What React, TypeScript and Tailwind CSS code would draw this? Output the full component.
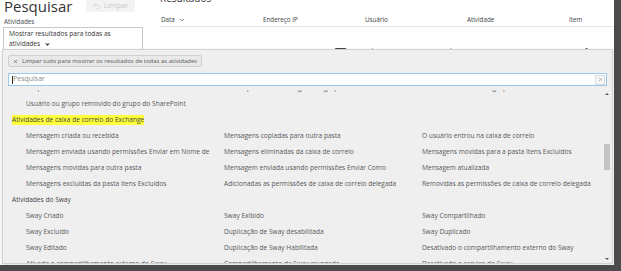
import { ChevronDown, Undo2, X } from "lucide-react";

const font = { fontFamily: '"Open Sans", "Noto Sans", sans-serif' };

const columns = ["Endereço IP", "Usuário", "Atividade", "Item"];

type Row = { group?: string; highlight?: boolean; items?: string[] };

const rows: Row[] = [
  { items: ["Grupo de site do SharePoint alterado", "Solicitação de acesso negada ao grupo", "Usuário adicionado ao grupo"] },
  { items: ["Usuário ou grupo removido do grupo do SharePoint"] },
  { group: "Atividades de caixa de correio do Exchange", highlight: true },
  { items: ["Mensagem criada ou recebida", "Mensagens copiadas para outra pasta", "O usuário entrou na caixa de correio"] },
  { items: ["Mensagem enviada usando permissões Enviar em Nome de", "Mensagens eliminadas da caixa de correio", "Mensagens movidas para a pasta Itens Excluídos"] },
  { items: ["Mensagens movidas para outra pasta", "Mensagem enviada usando permissões Enviar Como", "Mensagem atualizada"] },
  { items: ["Mensagens excluídas da pasta Itens Excluídos", "Adicionadas as permissões de caixa de correio delegada", "Removidas as permissões de caixa de correio delegada"] },
  { group: "Atividades do Sway" },
  { items: ["Sway Criado", "Sway Exibido", "Sway Compartilhado"] },
  { items: ["Sway Excluído", "Duplicação de Sway desabilitada", "Sway Duplicado"] },
  { items: ["Sway Editado", "Duplicação de Sway Habilitada", "Desativado o compartilhamento externo do Sway"] },
  { items: ["Ativado o compartilhamento externo do Sway", "Compartilhamento de Sway revogado", "Desativado o serviço do Sway"] },
];

export default function App() {
  return (
    <div className="w-[621px] h-[271px] bg-[#4a4a4a] overflow-hidden" style={font}>
      <div className="relative w-[614px] h-[265px] bg-white overflow-hidden">
        {/* top area */}
        <div className="flex">
          <div className="w-[155px] shrink-0 pl-[4px]">
            <div className="flex h-[16px] items-start">
              <p className="w-[82px] shrink-0 -mt-[4px] text-[15px] leading-[20px] text-[#333]">Pesquisar</p>
              <div className="flex h-[12px] w-[49px] items-center justify-center gap-[3px] bg-[#f3f3f3] text-[7.5px] text-[#c8c8c8]">
                <Undo2 size={8} strokeWidth={1.5} />
                Limpar
              </div>
            </div>
            <p className="mt-[1px] text-[6.3px] leading-[10px] text-[#444]">Atividades</p>
            <div className="-ml-[1px] h-[23px] w-[140px] border border-[#c8c8c8] px-[5px] pt-[1px] text-[6.6px] leading-[10px] text-[#333]">
              <p>Mostrar resultados para todas as</p>
              <p className="flex items-center gap-[4px]">
                atividades
                <ChevronDown size={7} strokeWidth={3} className="fill-[#333]" />
              </p>
            </div>
          </div>
          <div className="flex-1 pl-[5px]">
            <p className="-mt-[8px] text-[10px] leading-[12px] text-[#333]">Resultados</p>
            <div className="mt-[10px] flex h-[13px] items-center border-b border-[#e6e6e6] text-[6.3px] text-[#444]">
              <span className="flex w-[103px] items-center gap-[4px] pl-[1px]">
                Data
                <ChevronDown size={6} strokeWidth={3} />
              </span>
              {columns.map((c) => (
                <span key={c} className="w-[102px]">
                  {c}
                </span>
              ))}
            </div>
            <p className="ml-[175px] mt-[16px] text-[20px] leading-[24px] text-[#444] whitespace-nowrap">
              Tente executar uma pesquisa para ver os resultados
            </p>
          </div>
        </div>

        {/* dropdown panel */}
        <div className="absolute z-10 left-[2px] top-[49px] w-[611px] h-[215px] border border-[#d2d2d2] bg-[#efefef] shadow-[0_1px_3px_rgba(0,0,0,0.15)]">
          <div className="px-[5px] pt-[5px]">
            <div className="flex">
              <div className="flex h-[12px] items-center gap-[4px] rounded-[2px] border border-[#d0d0d0] bg-[#e9e9e9] px-[4px] text-[6px] text-[#555]">
                <X size={5} strokeWidth={3} />
                Limpar tudo para mostrar os resultados de todas as atividades
              </div>
            </div>
            <div className="mt-[6px] flex h-[13px] items-center border border-[#9cc8ec] bg-white pl-[3px] pr-[1px]">
              <span className="h-[8px] w-px bg-[#333]" />
              <span className="text-[7px] text-[#8a8a8a]">Pesquisar</span>
              <span className="ml-auto flex h-[10px] w-[10px] items-center justify-center border border-[#dcdcdc] bg-[#f6f6f6] text-[#999]">
                <X size={5} strokeWidth={3} />
              </span>
            </div>
          </div>

          <div className="relative mt-[4px] h-[173px] overflow-hidden">
            <div className="-mt-[10px] text-[6.6px] text-[#585858]">
              {rows.map((r, i) =>
                r.group ? (
                  <div key={i} className="flex h-[16px] items-center pl-[9px] text-[#444]">
                    <span className={r.highlight ? "bg-[#ffff3a] leading-[10px]" : ""}>{r.group}</span>
                  </div>
                ) : (
                  <div key={i} className="flex h-[16px] items-center pl-[23px]">
                    {r.items!.map((t) => (
                      <span key={t} className="w-[198px] shrink-0 whitespace-nowrap">
                        {t}
                      </span>
                    ))}
                  </div>
                ),
              )}
            </div>

            {/* scrollbar */}
            <div className="absolute right-[2px] top-[1px] bottom-0 flex w-[6px] flex-col items-center">
              <span className="mt-[2px] h-0 w-0 border-x-[2px] border-b-[2px] border-x-transparent border-b-[#555]" />
              <span className="mt-[49px] h-[26px] w-[6px] bg-[#c4c4c4]" />
              <span className="mb-[3px] mt-auto h-0 w-0 border-x-[2px] border-t-[2px] border-x-transparent border-t-[#555]" />
            </div>
          </div>
        </div>
      </div>
    </div>
  );
}
